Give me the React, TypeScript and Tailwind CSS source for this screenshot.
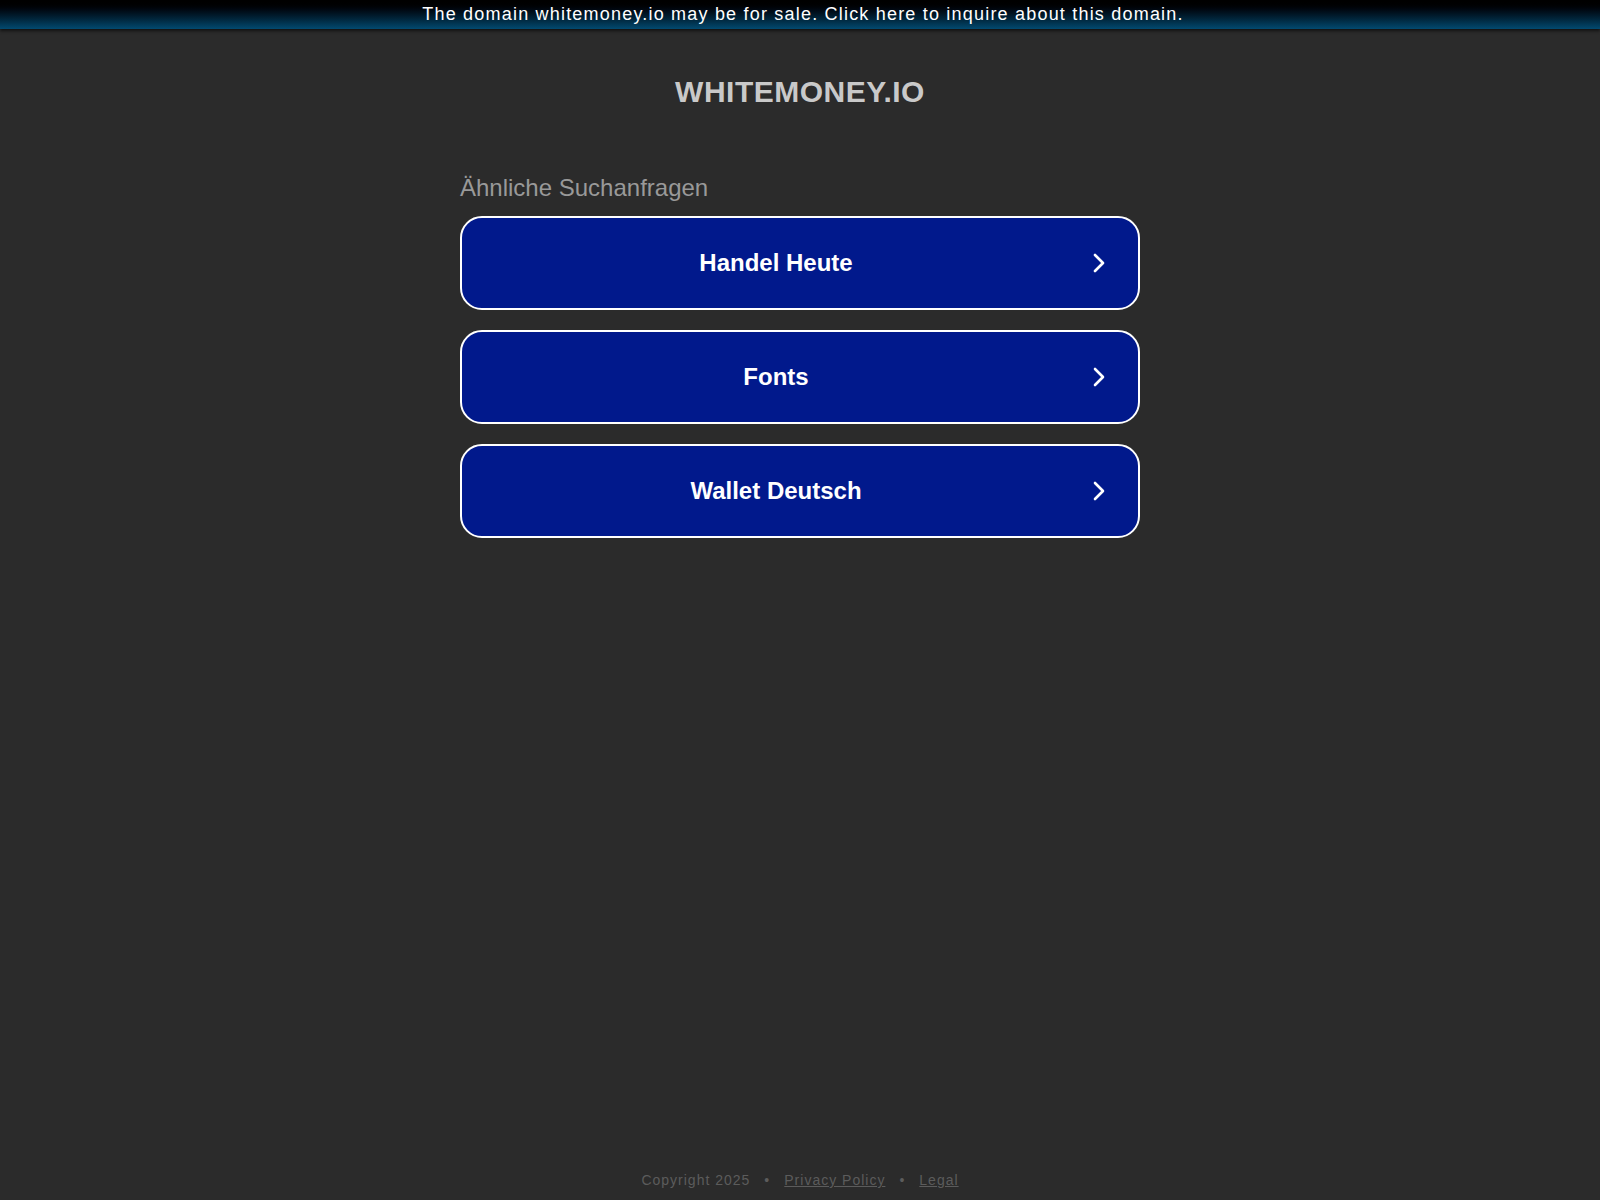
import React from "react";

const SEARCHES = ["Handel Heute", "Fonts", "Wallet Deutsch"];

const ChevronRight: React.FC = () => (
  <svg width="14" height="22" viewBox="0 0 14 22" fill="none">
    <path
      d="M3 3l8 8-8 8"
      stroke="white"
      strokeWidth="2.6"
      strokeLinecap="round"
      strokeLinejoin="round"
    />
  </svg>
);

const App: React.FC = () => {
  return (
    <div className="min-h-screen bg-[#2b2b2b] flex flex-col font-['Liberation_Sans',Arial,sans-serif]">

      {/* Sale banner */}

      <div className="h-[29px] bg-gradient-to-b from-[#000000] to-[#024a70] shadow-[0_2px_3px_rgba(0,0,0,0.6)] flex items-center justify-center pl-[6px]">
        <span className="text-white text-[18px] tracking-[1.2px] leading-none -mt-[2px]">
          The domain whitemoney.io may be for sale. Click here to inquire about this domain.
        </span>
      </div>

      {/* Domain title */}

      <h1 className="mt-[47px] text-center text-[30px] font-bold text-[#c9c9c9] tracking-[0.5px] leading-[32px]">
        WHITEMONEY.IO
      </h1>

      {/* Related searches */}

      <div className="w-[680px] mx-auto mt-[66px]">

        <p className="text-[24px] text-[#999999] leading-[28px] mb-[14px]">
          Ähnliche Suchanfragen
        </p>

        <div className="flex flex-col gap-[20px]">
          {SEARCHES.map((item) => (
            <a
              key={item}
              href="#"
              className="h-[94px] rounded-[22px] border-2 border-white bg-[#01198c] flex items-center pl-[20px] pr-[32px]"
            >
              <span className="flex-1 text-center text-white text-[24px] font-bold pr-[22px]">
                {item}
              </span>
              <ChevronRight />
            </a>
          ))}
        </div>

      </div>

      {/* Footer */}

      <div className="mt-auto pb-[9px] flex justify-center items-center gap-[14px] text-[14px] tracking-[1px] text-[#5c5c5c]">
        <span>Copyright 2025</span>
        <span>•</span>
        <a href="#" className="underline">Privacy Policy</a>
        <span>•</span>
        <a href="#" className="underline">Legal</a>
      </div>

    </div>
  );
};

export default App;
